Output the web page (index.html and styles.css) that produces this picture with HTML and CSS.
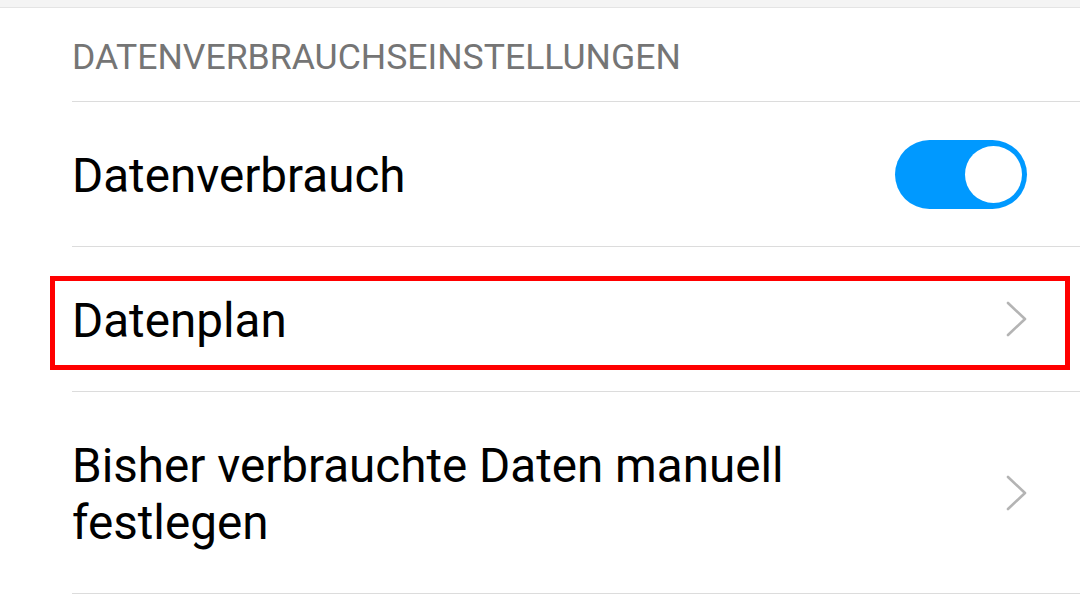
FILE: index.html
```html
<!DOCTYPE html>
<html lang="de">

<head>
    <meta charset="UTF-8">
    <meta name="viewport" content="width=device-width, initial-scale=1.0">
    <title>Datenverbrauch</title>
    <link rel="stylesheet" href="styles.css">
</head>

<body>
    <div class="topbar"></div>

    <div class="list">
        <div class="section-title">DATENVERBRAUCHSEINSTELLUNGEN</div>

        <div class="row">
            <span class="label">Datenverbrauch</span>
            <span class="toggle on"><span class="knob"></span></span>
        </div>

        <div class="row marked">
            <span class="label">Datenplan</span>
            <svg class="chevron" width="22" height="36" viewBox="0 0 22 36">
                <path d="M2 2 L19 18 L2 34" fill="none" stroke="#b4b4b4" stroke-width="2.6" stroke-linecap="round" stroke-linejoin="round" />
            </svg>
            <div class="highlight"></div>
        </div>

        <div class="row tall">
            <span class="label">Bisher verbrauchte Daten manuell festlegen</span>
            <svg class="chevron" width="22" height="36" viewBox="0 0 22 36">
                <path d="M2 2 L19 18 L2 34" fill="none" stroke="#b4b4b4" stroke-width="2.6" stroke-linecap="round" stroke-linejoin="round" />
            </svg>
        </div>
    </div>
</body>

</html>
```

FILE: styles.css
```css
body {
    margin: 0;
    background-color: #ffffff;
    font-family: Roboto, "Noto Sans", sans-serif;
    color: #000000;
}

.topbar {
    height: 7px;
    background-color: #f4f4f4;
    border-bottom: 1px solid #e4e4e4;
}

.list {
    margin-left: 72px;
}

.section-title {
    height: 94px;
    box-sizing: border-box;
    padding-top: 4px;
    display: flex;
    align-items: center;
    font-size: 35.6px;
    color: #757575;
    border-bottom: 1px solid #dcdcdc;
}

.row {
    position: relative;
    height: 144px;
    display: flex;
    align-items: center;
    justify-content: space-between;
    padding-right: 53px;
    border-bottom: 1px solid #dcdcdc;
}

.row.tall {
    height: 201px;
}

.label {
    font-size: 47.6px;
    line-height: 57px;
    max-width: 800px;
    padding-top: 5px;
}

.toggle {
    width: 132px;
    height: 69px;
    border-radius: 35px;
    background-color: #0099ff;
    display: flex;
    align-items: center;
    justify-content: flex-end;
    padding-right: 5px;
    box-sizing: border-box;
}

.knob {
    width: 57px;
    height: 57px;
    border-radius: 50%;
    background-color: #ffffff;
}

.chevron {
    margin-right: -1px;
}

.highlight {
    position: absolute;
    left: -22px;
    right: 10px;
    top: 29px;
    bottom: 21px;
    border: 5px solid #ff0000;
}
```
